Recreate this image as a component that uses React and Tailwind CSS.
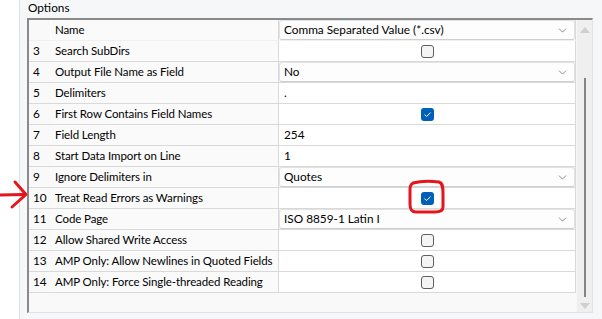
import { ChevronDown } from 'lucide-react'

const ROWS = [
  { n: '', name: 'Name', kind: 'select', value: 'Comma Separated Value (*.csv)' },
  { n: '3', name: 'Search SubDirs', kind: 'check', value: false },
  { n: '4', name: 'Output File Name as Field', kind: 'select', value: 'No' },
  { n: '5', name: 'Delimiters', kind: 'text', value: '.' },
  { n: '6', name: 'First Row Contains Field Names', kind: 'check', value: true },
  { n: '7', name: 'Field Length', kind: 'text', value: '254' },
  { n: '8', name: 'Start Data Import on Line', kind: 'text', value: '1' },
  { n: '9', name: 'Ignore Delimiters in', kind: 'select', value: 'Quotes' },
  { n: '10', name: 'Treat Read Errors as Warnings', kind: 'check', value: true },
  { n: '11', name: 'Code Page', kind: 'select', value: 'ISO 8859-1 Latin I' },
  { n: '12', name: 'Allow Shared Write Access', kind: 'check', value: false },
  { n: '13', name: 'AMP Only: Allow Newlines in Quoted Fields', kind: 'check', value: false },
  { n: '14', name: 'AMP Only: Force Single-threaded Reading', kind: 'check', value: false },
]

function Check({ on }) {
  if (on) {
    return (
      <span className="w-[13px] h-[13px] rounded-[3px] bg-[#005fb8] flex items-center justify-center">
        <svg width="9" height="7" viewBox="0 0 9 7"><path d="M1.5 3.6 L3.6 5.5 L7.6 1.5" fill="none" stroke="#fff" strokeWidth="1" /></svg>
      </span>
    )
  }
  return <span className="w-[13px] h-[13px] rounded-[3px] border border-[#5e5e5e] bg-[#f4f4f4]" />
}

function Value({ row }) {
  if (row.kind === 'select') {
    return (
      <div className="h-full flex items-center justify-between pl-[4px] pr-[5px] bg-[#fdfdfd] border border-[#e2e2e2] border-b-[#cfcfcf] rounded-[3px]">
        <span>{row.value}</span>
        <ChevronDown size={13} strokeWidth={1.1} className="text-[#404040]" />
      </div>
    )
  }
  if (row.kind === 'check') {
    return <div className="h-full flex items-center justify-center bg-white"><Check on={row.value} /></div>
  }
  return <div className="h-full flex items-center pl-[5px] bg-white">{row.value}</div>
}

export default function App() {
  return (
    <div className="relative w-[602px] h-[319px] flex bg-white text-[11.8px] text-black overflow-hidden whitespace-nowrap" style={{ fontFamily: 'Lato, "Liberation Sans", sans-serif' }}>
      <div className="w-[20px] shrink-0 bg-white border-r border-[#dae2ee]" />
      <div className="flex-1 bg-[#f6f7f9] pl-[7px] flex flex-col">
        <div className="h-[18px] pl-[1px] leading-[16px]">Options</div>
        <div className="w-[566px] h-[295px] flex border-t-2 border-l-2 border-t-[#8a8a8a] border-l-[#8a8a8a] border-r border-b border-r-[#e3e3e3] border-b-[#e3e3e3] bg-[#f9f9f9]">
          <div className="w-[547px] shrink-0 flex flex-col">
            {ROWS.map((row, i) => (
              <div key={i} className={`h-[21px] flex border-b ${i === 0 ? 'border-b-[#f0f0f0]' : 'border-b-[#d9d9d9]'}`}>
                <div className={`w-[22px] shrink-0 pl-[4px] flex items-center ${i === 0 ? 'border-r border-r-white' : ''}`}>{row.n}</div>
                <div className="w-[227px] shrink-0 overflow-hidden flex items-center pl-[4px] bg-[#fafafa] text-[11.5px] tracking-[-0.1px]">{row.name}</div>
                <div className="w-[298px] shrink-0 overflow-hidden border-l border-r border-[#d9d9d9]">
                  <Value row={row} />
                </div>
              </div>
            ))}
          </div>
          <div className="flex-1 bg-[#efefef] border-l border-[#f7f7f7] flex flex-col items-center">
            <svg width="10" height="6" viewBox="0 0 10 6" className="mt-[7px]"><path d="M0 6 L5 0 L10 6 Z" fill="#cfcfcf" /></svg>
            <div className="w-[2px] bg-[#858585] mt-[45px] h-[219px]" />
            <svg width="10" height="6" viewBox="0 0 10 6" className="mt-[6px]"><path d="M0 0 L5 6 L10 0 Z" fill="#cfcfcf" /></svg>
          </div>
        </div>
      </div>
      <svg className="absolute left-0 top-0 pointer-events-none" width="602" height="319">
        <path d="M0 195 L24 194.5" stroke="#e4151c" strokeWidth="3" fill="none" strokeLinecap="round" />
        <path d="M15 182 L26 194.5 L12 207" stroke="#e4151c" strokeWidth="3" fill="none" strokeLinecap="round" strokeLinejoin="round" />
        <path d="M413 183 C420 181 432 181 439 182 C443 183 443 188 443 194 L443 207 C443 211 440 212 435 212 L416 212 C411 212 410 209 410 204 L410 189 C410 185 411 183 416 182.5" stroke="#e4151c" strokeWidth="3" fill="none" strokeLinecap="round" />
      </svg>
    </div>
  )
}
